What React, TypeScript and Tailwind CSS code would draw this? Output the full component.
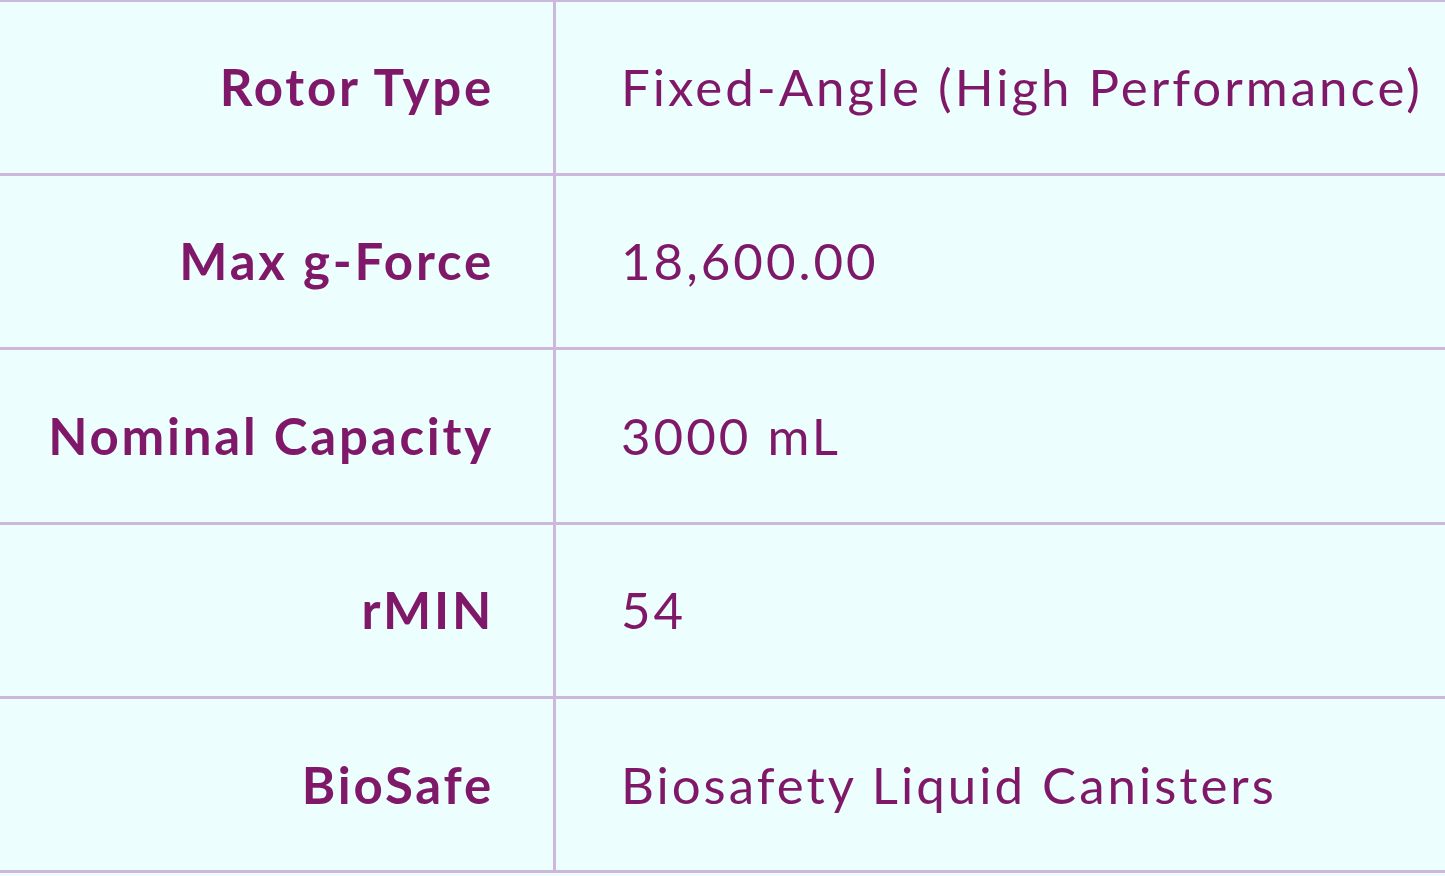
const rows = [
  ["Rotor Type", "Fixed-Angle (High Performance)"],
  ["Max g-Force", "18,600.00"],
  ["Nominal Capacity", "3000 mL"],
  ["rMIN", "54"],
  ["BioSafe", "Biosafety Liquid Canisters"],
];

export default function App() {
  return (
    <div className="w-[1445px] h-[876px] overflow-hidden bg-[#ecfefe]" style={{ fontFamily: 'Lato, sans-serif' }}>
      <div className="mt-[-1.5px] border-t-[3px] border-[#cdb7dc] text-[#7f1868]">
        {rows.map(([label, value]) => (
          <div key={label} className="flex h-[174.4px] border-b-[3px] border-[#cdb7dc]">
            <div className="w-[556px] shrink-0 border-r-[3px] border-[#cdb7dc] flex items-center justify-end pr-[59px] text-[51px] font-bold tracking-[2.8px]">
              {label}
            </div>
            <div className="flex-1 flex items-center pl-[65px] text-[51px] tracking-[3px] whitespace-nowrap">
              {value}
            </div>
          </div>
        ))}
      </div>
    </div>
  );
}
